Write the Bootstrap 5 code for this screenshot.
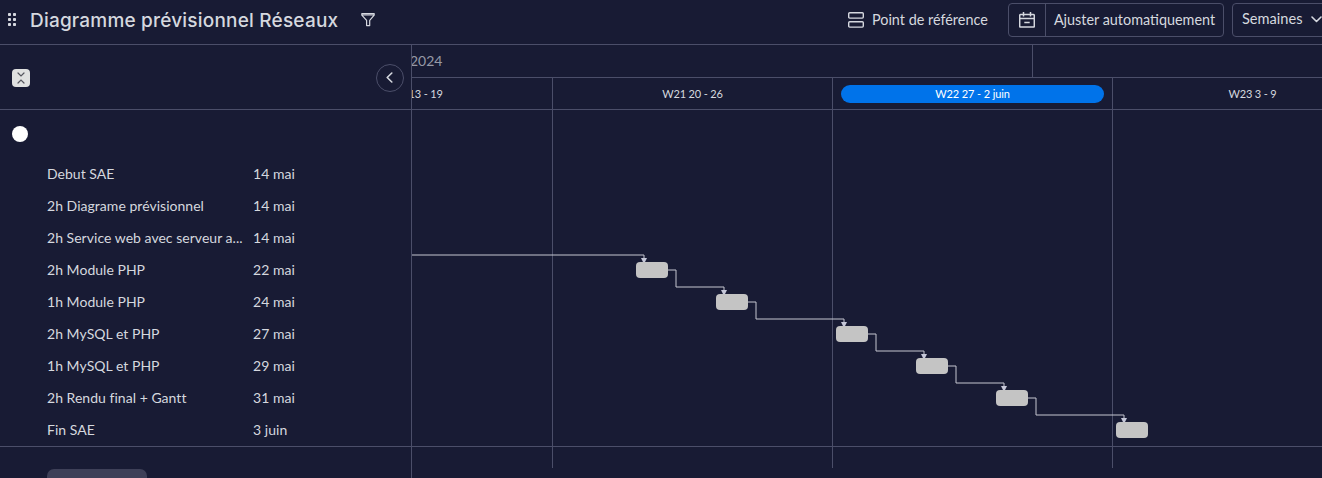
<!DOCTYPE html>
<html lang="fr">
<head>
<meta charset="utf-8">
<meta name="viewport" content="width=device-width, initial-scale=1">
<title>Diagramme prévisionnel Réseaux</title>
<link href="https://cdn.jsdelivr.net/npm/bootstrap@5.3.0/dist/css/bootstrap.min.css" rel="stylesheet">
<style>
  :root { --bg: #181b34; --line: #4b4e69; --ink: #d5d8df; }
  body { background: var(--bg); color: var(--ink); font-family: Lato, "Liberation Sans", sans-serif; font-size: 14px; line-height: 20px; height: 478px; }
  svg { display: block; flex: none; }
  .topbar { height: 45px; border-bottom: 1px solid var(--line); padding: 0 0 4px 8px; }
  .topbar h1 { font: 500 19px/30px Inter, sans-serif; letter-spacing: .2px; margin: 0 23px 0 13px; padding-top: 1px; }
  .tool { height: 34px; border: 1px solid var(--line); border-radius: 4px; font-size: 14.4px; }
  .tool-icon { width: 37px; border-right: 1px solid var(--line); }
  .baseline-label { width: 117px; margin: 0 19px 0 8px; font-size: 14.4px; }
  .auto-fit { width: 216px; margin-right: 8px; }
  .scale-pick { width: 98px; margin-right: -8px; padding: 0 0 2px 9px; font-size: 14.6px; }
  .scale-pick svg { margin: 1px 0 0 8px; }
  .side { width: 412px; border-right: 1px solid var(--line); }
  .side-head { height: 65px; border-bottom: 1px solid var(--line); padding: 1px 7px 0 12px; }
  .fold { width: 18px; height: 18px; border-radius: 4px; background: #e0e1e0; }
  .round-btn { width: 28px; height: 28px; border: 1px solid var(--line); padding-right: 2px; padding-bottom: 1px; }
  .tasks { height: 337px; border-bottom: 1px solid var(--line); }
  .group-row { height: 48px; padding-left: 12px; }
  .dot { width: 16px; height: 16px; background: #fff; }
  .task { height: 32px; padding-left: 47px; letter-spacing: .03px; }
  .task-name { width: 200px; margin-right: 6px; }
  .scroll-thumb { width: 100px; height: 9px; margin: 22px 0 0 47px; background: #3e4058; border-radius: 7px 7px 0 0; }
  .months { height: 33px; border-bottom: 1px solid var(--line); }
  .month { width: 621px; border-right: 1px solid var(--line); color: #9699a6; }
  .month span { margin-left: -2px; }
  .weeks { height: 32px; border-bottom: 1px solid var(--line); margin-left: -139px; font-size: 11px; letter-spacing: -.15px; }
  .week { width: 280px; border-right: 1px solid var(--line); padding: 0 8px; }
  .week span { height: 18px; line-height: 17px; border-radius: 9px; }
  .week .current { background: #0073ea; color: #fff; letter-spacing: -.1px; }
</style>
</head>
<body class="overflow-hidden d-flex flex-column">
<header class="topbar d-flex align-items-center flex-shrink-0">
  <svg width="9" height="14" fill="#d5d8df"><g id="d"><rect width="3" height="3" rx=".8"/><rect y="5" width="3" height="3" rx=".8"/><rect y="10" width="3" height="3" rx=".8"/></g><use href="#d" x="5"/></svg>
  <h1 class="text-nowrap">Diagramme prévisionnel Réseaux</h1>
  <svg width="14" height="14" fill="none" stroke="#d5d8df" stroke-width="1.2" stroke-linejoin="round"><path d="M.8 .7h12.4v1.4L8.7 7.4v5.2H5.6V7.4L.8 2.1zM1 2h12" /></svg>
  <div class="d-flex align-items-center ms-auto flex-shrink-0">
    <svg width="16" height="16" fill="none" stroke="#d5d8df" stroke-width="1.4"><rect x=".7" y=".7" width="14.6" height="5.4" rx="1"/><rect x=".7" y="9.7" width="14.6" height="5.4" rx="1"/></svg>
    <span class="baseline-label text-nowrap">Point de référence</span>
    <div class="tool auto-fit d-flex text-nowrap">
      <span class="tool-icon d-flex align-items-center justify-content-center">
        <svg width="16" height="16" fill="none" stroke="#d5d8df" stroke-width="1.5"><rect x=".7" y="2.6" width="14.6" height="12.5" rx="1"/><path d="M.7 6.5h14.6M4.5 0v4.5M11.5 0v4.5M5.3 10.6h5.4"/></svg>
      </span>
      <span class="flex-fill d-flex align-items-center justify-content-center">Ajuster automatiquement</span>
    </div>
    <div class="tool scale-pick d-flex align-items-center text-nowrap">
      <span>Semaines</span>
      <svg width="11" height="7" fill="none" stroke="#d5d8df" stroke-width="1.6" stroke-linecap="round" stroke-linejoin="round"><path d="M1 1l4.5 4.5L10 1"/></svg>
    </div>
  </div>
</header>
<main class="d-flex flex-fill">
  <aside class="side flex-shrink-0">
    <div class="side-head d-flex align-items-center justify-content-between">
      <span class="fold d-flex align-items-center justify-content-center"><svg width="8" height="12" fill="none" stroke="#55565e" stroke-width="1.2" stroke-linecap="round"><path d="M1 1l3 3 3-3M1 11l3-3 3 3"/></svg></span>
      <span class="round-btn rounded-circle d-flex align-items-center justify-content-center"><svg width="7" height="11" fill="none" stroke="#d5d8df" stroke-width="1.6" stroke-linecap="round" stroke-linejoin="round"><path d="M5.8 1L1.2 5.5 5.8 10"/></svg></span>
    </div>
    <div class="tasks">
      <div class="group-row d-flex align-items-center"><span class="dot rounded-circle"></span></div>
      <div class="task d-flex align-items-center"><span class="task-name text-nowrap">Debut SAE</span><span>14 mai</span></div>
      <div class="task d-flex align-items-center"><span class="task-name text-nowrap">2h Diagrame prévisionnel</span><span>14 mai</span></div>
      <div class="task d-flex align-items-center"><span class="task-name text-nowrap">2h Service web avec serveur a...</span><span>14 mai</span></div>
      <div class="task d-flex align-items-center"><span class="task-name text-nowrap">2h Module PHP</span><span>22 mai</span></div>
      <div class="task d-flex align-items-center"><span class="task-name text-nowrap">1h Module PHP</span><span>24 mai</span></div>
      <div class="task d-flex align-items-center"><span class="task-name text-nowrap">2h MySQL et PHP</span><span>27 mai</span></div>
      <div class="task d-flex align-items-center"><span class="task-name text-nowrap">1h MySQL et PHP</span><span>29 mai</span></div>
      <div class="task d-flex align-items-center"><span class="task-name text-nowrap">2h Rendu final + Gantt</span><span>31 mai</span></div>
      <div class="task d-flex align-items-center"><span class="task-name text-nowrap">Fin SAE</span><span>3 juin</span></div>
    </div>
    <div class="scroll-thumb"></div>
  </aside>
  <section class="flex-fill overflow-hidden">
    <div class="months d-flex"><div class="month d-flex align-items-center"><span>2024</span></div></div>
    <div class="weeks d-flex">
      <div class="week flex-shrink-0 d-flex align-items-center"><span class="w-100 text-center">W20 13 - 19</span></div>
      <div class="week flex-shrink-0 d-flex align-items-center"><span class="w-100 text-center">W21 20 - 26</span></div>
      <div class="week flex-shrink-0 d-flex align-items-center"><span class="w-100 text-center current">W22 27 - 2 juin</span></div>
      <div class="week flex-shrink-0 d-flex align-items-center"><span class="w-100 text-center">W23 3 - 9</span></div>
    </div>
    <svg width="910" height="368" viewBox="412 110 910 368">
      <path d="M552.5 110V468M832.5 110V468M1112.5 110V468M412 446.5H1322" stroke="#4b4e69"/>
      <g fill="none" stroke="#c5c7d0">
        <path d="M412 255H644V262"/><path d="M668 270H676V287H724V294"/><path d="M748 302H756V319H844V326"/>
        <path d="M868 334H876V351H924V358"/><path d="M948 366H956V383H1004V390"/><path d="M1028 398H1036V415H1124V422"/>
      </g>
      <path fill="#c5c7d8" d="M641 258h6l-2 4h-2zM721 290h6l-2 4h-2zM841 322h6l-2 4h-2zM921 354h6l-2 4h-2zM1001 386h6l-2 4h-2zM1121 418h6l-2 4h-2z"/>
      <g fill="#c4c4c4">
        <rect x="636" y="262" width="32" height="16" rx="4"/><rect x="716" y="294" width="32" height="16" rx="4"/>
        <rect x="836" y="326" width="32" height="16" rx="4"/><rect x="916" y="358" width="32" height="16" rx="4"/>
        <rect x="996" y="390" width="32" height="16" rx="4"/><rect x="1116" y="422" width="32" height="16" rx="4"/>
      </g>
    </svg>
  </section>
</main>
<script src="https://cdn.jsdelivr.net/npm/bootstrap@5.3.0/dist/js/bootstrap.bundle.min.js"></script>
</body>
</html>
